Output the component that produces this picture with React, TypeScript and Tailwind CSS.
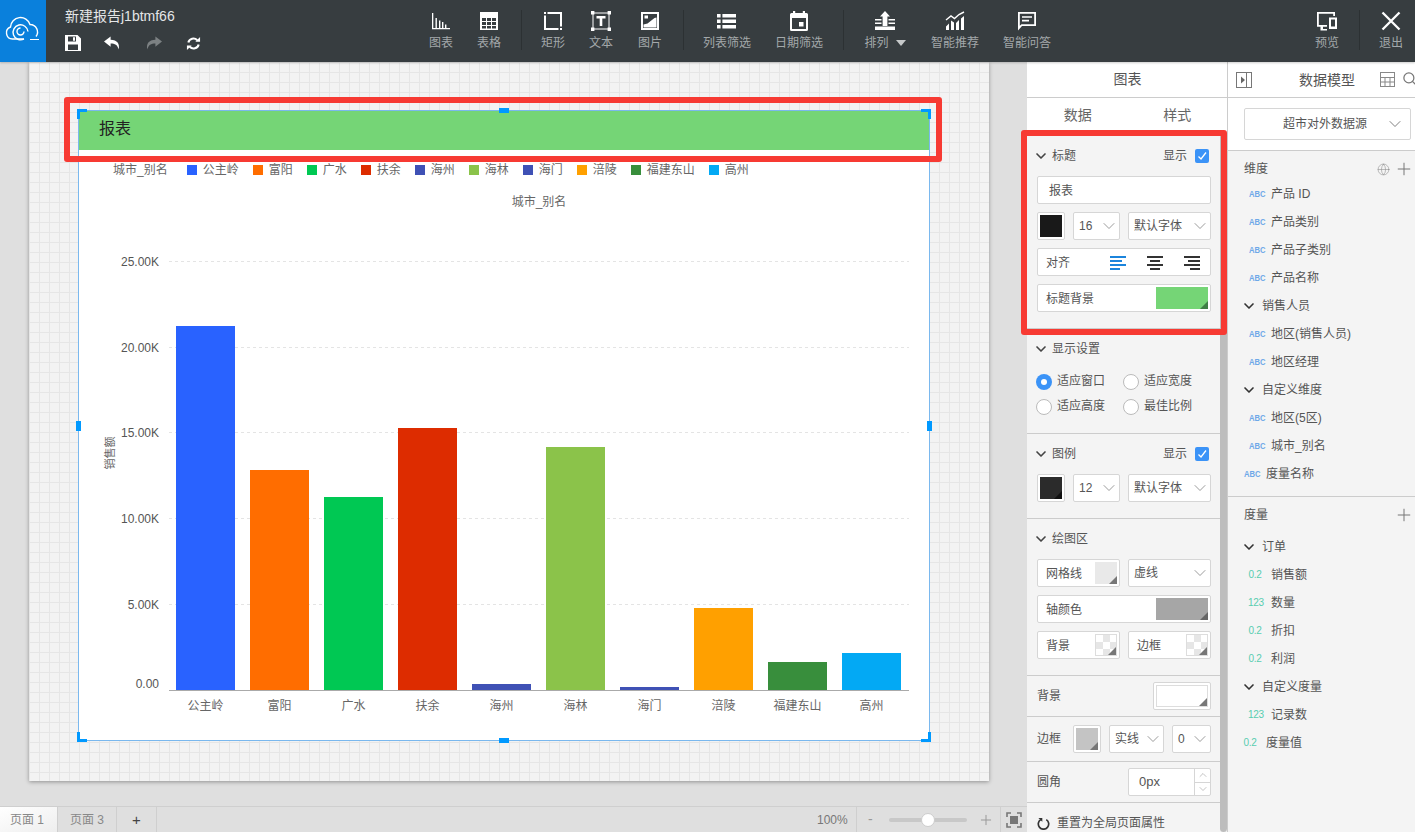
import { ChevronDown, Plus, Search, Globe, ChevronUp } from 'lucide-react';
import { ReactNode } from 'react';

const bars = [
  { name: '公主岭', top: 326, color: '#2962ff' },
  { name: '富阳', top: 470, color: '#ff6d00' },
  { name: '广水', top: 497, color: '#00c853' },
  { name: '扶余', top: 428, color: '#dd2c00' },
  { name: '海州', top: 684, color: '#3f51b5' },
  { name: '海林', top: 447, color: '#8bc34a' },
  { name: '海门', top: 687, color: '#3f51b5' },
  { name: '涪陵', top: 608, color: '#ffa000' },
  { name: '福建东山', top: 662, color: '#388e3c' },
  { name: '高州', top: 653, color: '#03a9f4' },
];

const ticks = [
  { label: '25.00K', y: 261 },
  { label: '20.00K', y: 347 },
  { label: '15.00K', y: 432 },
  { label: '10.00K', y: 518 },
  { label: '5.00K', y: 604 },
];

const field = 'border border-[#d6d6d6] rounded-[2px] bg-white flex items-center text-xs text-[#555]';

const ToolItem = ({ icon, label, w = 'w-[48px]' }: { icon: ReactNode; label: ReactNode; w?: string }) => (
  <div className={`${w} flex flex-col items-center pt-[11px] text-xs text-[#a3a8aa]`}>
    <div className="h-[20px] w-[20px] text-white">{icon}</div>
    <div className="mt-[4px] leading-[16px] whitespace-nowrap">{label}</div>
  </div>
);

const Sep = () => <div className="w-px h-[40px] mt-[10px] mx-[7.5px] bg-[#2c3133]" />;

const icons = {
  chart: (
    <svg viewBox="0 0 20 20" fill="currentColor"><path d="M1 2h1.300v15H19v1.300H1z" /><path d="M4.500 7h1.400v10H4.500zM8 9.500h1.400V17H8zM11 11h1.400v6H11zM14 13.500h1.400V17H14z" /></svg>
  ),
  table: (
    <svg viewBox="0 0 20 20"><rect x="1" y="1" width="18" height="18" fill="currentColor" /><path d="M3 7h4v3H3zM8 7h4v3H8zM13 7h4v3h-4zM3 11h4v3H3zM8 11h4v3H8zM13 11h4v3h-4zM3 15h4v2.500H3zM8 15h4v2.500H8zM13 15h4v2.500h-4z" fill="#373d40" /></svg>
  ),
  rect: (
    <svg viewBox="0 0 20 20" fill="currentColor"><path d="M1 1h2v2H1zM4.500 1H19v2H4.500zM17 3h2v12.500h-2zM17 17h2v2h-2zM1 17h14.500v2H1zM1 4.500h2V17H1z" /></svg>
  ),
  text: (
    <svg viewBox="0 0 20 20" fill="currentColor"><path d="M2 2h16v16H2z" fill="none" stroke="currentColor" strokeWidth="1" /><path d="M0 0h3.400v3.400H0zM16.600 0H20v3.400h-3.400zM0 16.600h3.400V20H0zM16.600 16.600H20V20h-3.400z" /><path d="M5.500 5h9v2.400h-3.200V15H8.700V7.400H5.500z" /></svg>
  ),
  image: (
    <svg viewBox="0 0 20 20" fill="currentColor"><path fillRule="evenodd" d="M1 1h18v18H1zM3 3v14h14V3z" /><path d="M3.500 16.500v-3l4-1 7-5.500 2-.5v10z" /><rect x="4.500" y="4.500" width="3.500" height="3" /></svg>
  ),
  list: (
    <svg viewBox="0 0 20 20" fill="currentColor"><path d="M0 3h3.600v3.400H0zM5.400 3H19v3.400H5.400zM0 8.500h3.600v3.400H0zM5.400 8.500H19v3.400H5.400zM0 14h3.600v3.400H0zM5.400 14H19v3.400H5.400z" /></svg>
  ),
  calendar: (
    <svg viewBox="0 0 20 20" fill="currentColor"><path fillRule="evenodd" d="M4 0h2.200v2h7.600V0H16v2h1.500A1.500 1.500 0 0119 3.500v15a1.500 1.500 0 01-1.500 1.500h-15A1.500 1.500 0 011 18.500v-15A1.500 1.500 0 012.500 2H4zM3 7v11h14V7z" /><rect x="10" y="11" width="4.500" height="4.500" /></svg>
  ),
  arrange: (
    <svg viewBox="0 0 20 20" fill="currentColor"><path d="M10 0l5 5.500H12.400V15H7.600V5.500H5z" /><path d="M0 8h6.500v1.500H0zM13.500 8H20v1.500h-6.500zM0 11.500h6.500V13H0zM13.500 11.500H20V13h-6.500zM0 15.500h20V19H0z" /></svg>
  ),
  recommend: (
    <svg viewBox="0 0 20 20" fill="currentColor"><path d="M1 9l5-4 3.500 2.500L14 3.500l5-2.500" fill="none" stroke="currentColor" strokeWidth="1.400" /><path d="M1 19v-3.500l3-3V19zM6 19V9.500l3 2V19zM11 19v-7l3-3v10zM16 19V7.500l3-2.500v14z" /></svg>
  ),
  answer: (
    <svg viewBox="0 0 20 20" fill="currentColor"><path fillRule="evenodd" d="M1 1h18v14H5l-4 4.500zM2.800 2.800v12l1.700-1.600h12.700V2.800z" /><path d="M5 5.200h10v1.600H5zM5 8.800h7v1.600H5z" /></svg>
  ),
  preview: (
    <svg viewBox="0 0 20 20" fill="currentColor"><path fillRule="evenodd" d="M0 1h18v4h-1.800V2.800H1.800V14H10v1.800H6V18h4v1.500H3.500V15.800H0z" /><path fillRule="evenodd" d="M12 6.500h8V18h-8zM14 8.500v7h4v-7z" /></svg>
  ),
  close: (
    <svg viewBox="0 0 20 20" fill="none" stroke="currentColor" strokeWidth="2.300"><path d="M1.500 1.500l17 17M18.500 1.500l-17 17" /></svg>
  ),
};

const Corner = ({ className }: { className: string }) => (
  <div className={`absolute w-[10px] h-[10px] border-[#0099ff] ${className}`} />
);

const Swatch = ({ className, tri = 'border-b-[#777]' }: { className: string; tri?: string }) => (
  <div className={`relative ${className}`}>
    <div className={`absolute right-0 bottom-0 w-0 h-0 border-l-[8px] border-l-transparent border-b-[8px] ${tri}`} />
  </div>
);

const Check = () => (
  <div className="w-[14px] h-[14px] rounded-[2px] bg-[#3b93f7] flex items-center justify-center">
    <svg viewBox="0 0 14 14" className="w-[14px] h-[14px]" fill="none" stroke="#fff" strokeWidth="1.300"><path d="M3.500 7.500l2.500 2.500 5-6.500" /></svg>
  </div>
);

const SectionHead = ({ title, show }: { title: string; show?: boolean }) => (
  <div className="h-[20px] flex items-center text-xs text-[#555]">
    <ChevronDown size={16} strokeWidth={2.500} className="ml-[-4px] text-[#444]" />
    <span className="ml-[3px]">{title}</span>
    {show && (
      <div className="ml-auto flex items-center gap-[8px] mr-[2px]">
        <span>显示</span>
        <Check />
      </div>
    )}
  </div>
);

const Select = ({ label, className }: { label: string; className: string }) => (
  <div className={`${field} ${className} h-[28px] pl-[5px] justify-between`}>
    <span>{label}</span>
    <ChevronDown size={20} strokeWidth={1} className="text-[#888]" />
  </div>
);

const Radio = ({ label, on }: { label: string; on?: boolean }) => (
  <div className="flex items-center text-xs text-[#555] h-[25px]">
    {on ? (
      <div className="w-[16px] h-[16px] rounded-full bg-[#3b93f7] flex items-center justify-center">
        <div className="w-[6px] h-[6px] rounded-full bg-white" />
      </div>
    ) : (
      <div className="w-[16px] h-[16px] rounded-full border border-[#bbb] bg-white" />
    )}
    <span className="ml-[5px] relative top-[-1px]">{label}</span>
  </div>
);

const Align = ({ right, center, color }: { right?: boolean; center?: boolean; color: string }) => (
  <svg viewBox="0 0 16 14" className="w-[16px] h-[14px]" fill={color}>
    <rect x="0" y="0" width="16" height="2" />
    <rect x={right ? 4 : center ? 3 : 0} y="4" width={center ? 10 : 12} height="2" />
    <rect x="0" y="8" width="16" height="2" />
    <rect x={right ? 6 : center ? 3 : 0} y="12" width="10" height="2" />
  </svg>
);

const Tag = ({ kind }: { kind: string }) => (
  <span
    className={`inline-block w-[14px] text-center leading-none whitespace-nowrap ${
      kind === 'ABC' ? 'text-[9px] font-bold text-[#6ea8e8] scale-x-85' : 'text-[10px] text-[#58cdb0] tracking-[-0.3px]'
    }`}
  >
    {kind}
  </span>
);

const Leaf = ({ kind, name, flush }: { kind: string; name: string; flush?: boolean }) => (
  <div className={`h-[28px] flex items-center text-xs text-[#555] ${flush ? 'pl-[15px]' : 'pl-[20px]'}`}>
    <Tag kind={kind} />
    <span className="ml-[9px]">{name}</span>
  </div>
);

const Group = ({ name }: { name: string }) => (
  <div className="h-[28px] flex items-center text-xs text-[#555] pl-[17px]">
    <ChevronDown size={16} strokeWidth={2.500} className="text-[#333] ml-[-4px]" />
    <span className="ml-[5px]">{name}</span>
  </div>
);

export default function App() {
  return (
    <div className="relative w-[1415px] h-[832px] overflow-hidden bg-[#dfdfdf] font-['Liberation_Sans','Noto_Sans_CJK_SC',sans-serif]">
      {/* Top bar */}
      <header className="h-[62px] flex bg-[#373d40] shadow-[0_1px_2px_rgba(0,0,0,0.2)] relative z-10">
        <div className="w-[46px] bg-[#0a80dc]">
          <svg viewBox="0 0 46 62" className="w-[46px] h-[62px]" fill="none" stroke="#fff" strokeWidth="1.400">
            <path d="M24 39H12.500A6.200 6.200 0 0 1 10.500 27A10 10 0 0 1 30 24.500A7.500 7.500 0 0 1 36 36.500" />
            <path d="M24 39A7.500 7.500 0 1 1 28 31.500" />
            <path d="M24 31.500A3.500 3.500 0 1 1 20.500 28" />
            <path d="M30 39.500H39" strokeWidth="1" />
          </svg>
        </div>
        <div className="w-[371px] pl-[19px] pt-[8px]">
          <div className="text-[14px] leading-[17px] text-[#e4e6e7]">新建报告j1btmf66</div>
          <div className="flex items-center gap-[24px] mt-[10px] text-white">
            <svg viewBox="0 0 16 16" className="w-[16px] h-[16px] mr-[-1px]" fill="currentColor"><path fillRule="evenodd" d="M0 0h12.500L16 3.500V16H0zM3 1.500v5h8v-5zM8 2.200h2v3.500H8zM3 9.500V15h10V9.500z" /></svg>
            <svg viewBox="0 0 18 16" className="w-[17px] h-[16px]" fill="currentColor"><path d="M7 1L0 6.500 7 12V8.500c4.500 0 7.500 1.500 8.500 6.500C17 9 14 4.500 7 4.500z" /></svg>
            <svg viewBox="0 0 18 16" className="w-[17px] h-[16px]" fill="#7c8183"><path d="M11 1l7 5.500L11 12V8.500C6.500 8.500 3.500 10 2.500 15 1 9 4 4.500 11 4.500z" /></svg>
            <svg viewBox="0 0 16 16" className="w-[15px] h-[15px]" fill="none" stroke="currentColor" strokeWidth="2.200"><path d="M2.500 7a5.500 5.500 0 019.500-2.500M13.500 9A5.500 5.500 0 014 11.500" /><path d="M15 1v5h-5zM1 15v-5h5z" fill="currentColor" stroke="none" /></svg>
          </div>
        </div>
        <div className="flex">
          <ToolItem icon={icons.chart} label="图表" />
          <ToolItem icon={icons.table} label="表格" />
          <Sep />
          <ToolItem icon={icons.rect} label="矩形" />
          <ToolItem icon={icons.text} label="文本" />
          <ToolItem icon={icons.image} label="图片" w="w-[50px]" />
          <Sep />
          <ToolItem icon={icons.list} label="列表筛选" w="w-[72px]" />
          <ToolItem icon={icons.calendar} label="日期筛选" w="w-[72px]" />
          <Sep />
          <ToolItem
            w="w-[68px]"
            icon={icons.arrange}
            label={
              <span className="flex items-center gap-[7px]">
                排列
                <span className="w-0 h-0 border-x-[5px] border-x-transparent border-t-[6px] border-t-[#c6c9ca]" />
              </span>
            }
          />
          <ToolItem icon={icons.recommend} label="智能推荐" w="w-[72px]" />
          <ToolItem icon={icons.answer} label="智能问答" w="w-[72px]" />
        </div>
        <div className="ml-auto flex">
          <ToolItem icon={icons.preview} label="预览" />
          <Sep />
          <ToolItem icon={icons.close} label="退出" />
        </div>
      </header>

      <div className="flex h-[770px]">
        {/* Canvas */}
        <main className="w-[1027px] flex flex-col">
          <div className="flex-1 pl-[29px]">
            <div className="w-[960px] h-[719px] pt-[48px] pl-[49px] bg-[#f3f3f3] bg-[linear-gradient(#e6e6e6_1px,transparent_1px),linear-gradient(90deg,#e6e6e6_1px,transparent_1px)] bg-[size:10px_10px] shadow-[0_1px_4px_rgba(0,0,0,0.35)]">
              <div className="relative w-[852px] h-[631px] bg-white border border-[#7ab8ee]">
                <div className="h-[39px] bg-[#75d576] flex items-center pl-[20px] pb-[3px] text-[16px] text-[#222]">报表</div>
                <div className="mt-[10px] h-[20px] flex items-center pl-[34px] text-xs text-[#666]">
                  <span className="mr-[5px]">城市_别名</span>
                  {bars.map((b) => (
                    <div key={b.name} className="flex items-center ml-[14px]">
                      <span className="w-[10px] h-[10px] mr-[6px]" style={{ backgroundColor: b.color }} />
                      {b.name}
                    </div>
                  ))}
                </div>
                <svg viewBox="79 180 850 560" className="w-[850px] h-[560px] block">
                  <text x="539" y="206" textAnchor="middle" fontSize="12" fill="#666">城市_别名</text>
                  <text transform="translate(113.500 453) rotate(-90)" textAnchor="middle" fontSize="11" fill="#666">销售额</text>
                  {ticks.map((t) => (
                    <g key={t.label}>
                      <line x1="169" x2="909" y1={t.y + 0.5} y2={t.y + 0.5} stroke="#e4e4e4" strokeDasharray="3 3" />
                      <text x="159" y={t.y + 4.5} textAnchor="end" fontSize="12" fill="#555">{t.label}</text>
                    </g>
                  ))}
                  <text x="159" y="688" textAnchor="end" fontSize="12" fill="#555">0.00</text>
                  {bars.map((b, i) => (
                    <g key={b.name}>
                      <rect x={176 + i * 74} y={b.top} width="59" height={690 - b.top} fill={b.color} />
                      <text x={205.5 + i * 74} y="710" textAnchor="middle" fontSize="12" fill="#666">{b.name}</text>
                    </g>
                  ))}
                  <line x1="169" x2="909" y1="690.5" y2="690.5" stroke="#aaa" />
                </svg>

                {/* Selection handles */}
                <Corner className="left-[-2px] top-[-2px] border-l-[3px] border-t-[3px]" />
                <Corner className="right-[-2px] top-[-2px] border-r-[3px] border-t-[3px]" />
                <Corner className="left-[-2px] bottom-[-2px] border-l-[3px] border-b-[3px]" />
                <Corner className="right-[-2px] bottom-[-2px] border-r-[3px] border-b-[3px]" />
                <div className="absolute left-[420px] top-[-3px] w-[10px] h-[5px] bg-[#0099ff]" />
                <div className="absolute left-[420px] bottom-[-3px] w-[10px] h-[5px] bg-[#0099ff]" />
                <div className="absolute left-[-3px] top-[310px] w-[5px] h-[10px] bg-[#0099ff]" />
                <div className="absolute right-[-3px] top-[310px] w-[5px] h-[10px] bg-[#0099ff]" />
              </div>
            </div>
          </div>
          {/* Page tabs and zoom */}
          <div className="h-[26px] flex items-stretch border-t border-[#cfcfcf] text-xs text-[#888]">
            <div className="w-[57px] pl-[10px] bg-gradient-to-br from-white to-[#eeeeee] flex items-center">页面 1</div>
            <div className="w-[60px] border-x border-[#cfcfcf] flex items-center justify-center">页面 3</div>
            <div className="w-[40px] border-r border-[#cfcfcf] flex items-center justify-center text-[15px] text-[#444]">+</div>
            <div className="ml-auto w-[39px] flex items-center text-[#777]">100%</div>
            <div className="w-[144px] border-l border-[#cfcfcf] flex items-center text-[#999]">
              <span className="ml-[11px] w-[6px] text-[14px]">-</span>
              <div className="relative ml-[15px] w-[78px] h-[4px] rounded-full bg-[#c8c8c8]">
                <div className="absolute left-[32px] top-[-5px] w-[14px] h-[14px] rounded-full bg-white border border-[#ccc]" />
              </div>
              <Plus size={16} strokeWidth={1.500} className="ml-[11px]" />
            </div>
            <div className="w-[27px] border-l border-[#cfcfcf] flex items-center justify-center">
              <svg viewBox="0 0 16 16" className="w-[16px] h-[16px]" fill="none" stroke="#777" strokeWidth="1.600"><path d="M1 5V1h4M11 1h4v4M15 11v4h-4M5 15H1v-4" /><rect x="4" y="4" width="8" height="8" fill="#777" stroke="none" /></svg>
            </div>
          </div>
        </main>

        {/* Style panel */}
        <aside className="w-[200px] flex flex-col bg-[#f4f4f4] overflow-hidden">
          <div className="h-[36px] shrink-0 bg-white border-b border-[#ccc] flex items-center justify-center pl-[1px] pb-[1px] text-sm text-[#555]">图表</div>
          <div className="h-[36px] shrink-0 bg-white flex items-center text-sm text-[#666] pl-[1px] pb-[2px]">
            <div className="w-[100px] text-center">数据</div>
            <div className="w-[100px] text-center">样式</div>
          </div>
          <div className="flex flex-1 min-h-0">
            <div className="w-[193px] shrink-0">
              <section className="h-[195px] border-b border-[#ccc] pl-[10px] pr-[9px] pt-[12px]">
                <SectionHead title="标题" show />
                <div className={`${field} w-[174px] mt-[10px] h-[28px] pl-[11px] pt-[1px]`}>报表</div>
                <div className="flex mt-[8px]">
                  <div className="w-[28px] h-[28px] p-[2px] border border-[#d6d6d6] bg-white rounded-[2px]"><div className="w-full h-full bg-[#191919]" /></div>
                  <Select label="16" className="w-[47px] ml-[8px]" />
                  <Select label="默认字体" className="w-[83px] ml-[8px]" />
                </div>
                <div className={`${field} w-[174px] mt-[8px] h-[28px] pl-[8px] pt-[1px]`}>
                  <span>对齐</span>
                  <div className="ml-auto flex gap-[21px] mr-[10px]">
                    <Align color="#1b84dc" />
                    <Align center color="#333" />
                    <Align right color="#333" />
                  </div>
                </div>
                <div className={`${field} w-[174px] mt-[8px] h-[28px] pl-[8px] justify-between pr-[2px]`}>
                  <span className="pt-[1px]">标题背景</span>
                  <Swatch className="w-[52px] h-[22px] bg-[#75d576]" tri="border-b-[#3f7f45]" />
                </div>
              </section>
              <section className="h-[105px] border-b border-[#ccc] pl-[10px] pr-[9px] pt-[10px]">
                <SectionHead title="显示设置" />
                <div className="grid grid-cols-[87px_1fr] mt-[10px] ml-[-1px]">
                  <Radio label="适应窗口" on />
                  <Radio label="适应宽度" />
                  <Radio label="适应高度" />
                  <Radio label="最佳比例" />
                </div>
              </section>
              <section className="h-[85px] border-b border-[#ccc] pl-[10px] pr-[9px] pt-[10px]">
                <SectionHead title="图例" show />
                <div className="flex mt-[10px]">
                  <div className="w-[28px] h-[28px] p-[2px] border border-[#d6d6d6] bg-white rounded-[2px]">
                    <Swatch className="w-full h-full bg-[#2b2b2b]" tri="border-b-[#111]" />
                  </div>
                  <Select label="12" className="w-[47px] ml-[8px]" />
                  <Select label="默认字体" className="w-[83px] ml-[8px]" />
                </div>
              </section>
              <section className="h-[157px] border-b border-[#ccc] pl-[10px] pr-[9px] pt-[10px]">
                <SectionHead title="绘图区" />
                <div className="flex mt-[10px]">
                  <div className={`${field} w-[83px] h-[28px] pl-[8px] pr-[2px] justify-between`}>
                    <span className="pt-[1px]">网格线</span>
                    <Swatch className="w-[22px] h-[22px] bg-[#e9e9e9]" />
                  </div>
                  <Select label="虚线" className="w-[83px] ml-[8px]" />
                </div>
                <div className={`${field} w-[174px] h-[28px] mt-[8px] pl-[8px] pr-[2px] justify-between`}>
                  <span className="pt-[1px]">轴颜色</span>
                  <Swatch className="w-[52px] h-[22px] bg-[#a6a6a6]" tri="border-b-[#666]" />
                </div>
                <div className="flex mt-[8px]">
                  <div className={`${field} w-[83px] h-[28px] pl-[8px] pr-[2px] justify-between`}>
                    <span className="pt-[1px]">背景</span>
                    <Swatch className="w-[22px] h-[22px] border border-[#ddd] bg-[repeating-conic-gradient(#e6e6e6_0_25%,#fff_0_50%)] bg-[size:14px_14px]" />
                  </div>
                  <div className={`${field} w-[83px] h-[28px] ml-[8px] pl-[8px] pr-[2px] justify-between`}>
                    <span className="pt-[1px]">边框</span>
                    <Swatch className="w-[22px] h-[22px] border border-[#ddd] bg-[repeating-conic-gradient(#e6e6e6_0_25%,#fff_0_50%)] bg-[size:14px_14px]" />
                  </div>
                </div>
              </section>
              <section className="h-[41px] border-b border-[#ccc] pl-[10px] flex items-center text-xs text-[#555]">
                <span>背景</span>
                <div className="ml-auto mr-[9px] w-[58px] h-[28px] p-[2px] border border-[#d6d6d6] bg-white rounded-[2px]">
                  <Swatch className="w-full h-full border border-[#ddd] bg-white" />
                </div>
              </section>
              <section className="h-[45px] border-b border-[#ccc] pl-[10px] flex items-center text-xs text-[#555]">
                <span className="w-[36px]">边框</span>
                <div className="w-[28px] h-[28px] p-[2px] border border-[#d6d6d6] bg-white rounded-[2px]">
                  <Swatch className="w-full h-full bg-[#c4c4c4]" />
                </div>
                <Select label="实线" className="w-[55px] ml-[8px]" />
                <Select label="0" className="w-[39px] ml-[8px]" />
              </section>
              <section className="h-[41px] border-b border-[#ccc] pl-[10px] flex items-center text-xs text-[#555]">
                <span>圆角</span>
                <div className={`${field} ml-auto mr-[9px] w-[83px] h-[28px] pl-[10px] justify-between`}>
                  <span className="text-[13px]">0px</span>
                  <div className="w-[16px] h-full border-l border-[#d6d6d6] flex flex-col text-[#888]">
                    <div className="flex-1 border-b border-[#d6d6d6] flex items-center justify-center"><ChevronUp size={12} strokeWidth={1} /></div>
                    <div className="flex-1 flex items-center justify-center"><ChevronDown size={12} strokeWidth={1} /></div>
                  </div>
                </div>
              </section>
              <div className="h-[40px] pl-[10px] flex items-center text-xs text-[#555]">
                <svg viewBox="0 0 14 14" className="w-[13px] h-[13px]" fill="none" stroke="#333" strokeWidth="1.800"><path d="M4 2.800a5.600 5.600 0 106 0" /><path d="M1.500 1h4.200v4.200z" fill="#333" stroke="none" /></svg>
                <span className="ml-[7px]">重置为全局页面属性</span>
              </div>
            </div>
            <div className="w-[7px] bg-[#bdbdbd] rounded-b-[4px]" />
          </div>
        </aside>

        {/* Data model panel */}
        <aside className="w-[188px] border-l border-[#ccc] bg-[#f4f4f4] overflow-hidden">
          <div className="h-[36px] bg-white border-b border-[#ccc] flex items-center relative text-sm text-[#555]">
            <svg viewBox="0 0 16 16" className="absolute left-[8px] top-[10px] w-[16px] h-[16px]" fill="none" stroke="#777"><rect x="0.500" y="0.500" width="15" height="15" /><path d="M10.500 1v14" /><path d="M5 4.500l4 3.500-4 3.500z" fill="#666" stroke="none" /></svg>
            <span className="ml-[71px]">数据模型</span>
            <svg viewBox="0 0 15 15" className="absolute left-[152px] top-[10px] w-[15px] h-[15px]" fill="none" stroke="#888"><rect x="0.500" y="0.500" width="14" height="14" /><path d="M0 5.500h15M0 10h15M5 5v10M10 5v10" /></svg>
            <Search size={15} strokeWidth={2} className="absolute left-[174px] top-[9px] text-[#777]" />
          </div>
          <div className="h-[53px] bg-white border-b border-[#ccc] pl-[16px] pt-[10px]">
            <div className="w-[167px] h-[32px] border border-[#d6d6d6] rounded-[2px] flex items-center text-xs text-[#555] pl-[38px]">
              超市对外数据源
              <ChevronDown size={20} strokeWidth={1} className="ml-auto mr-[5px] text-[#666]" />
            </div>
          </div>
          <div className="h-[346px] border-b border-[#ccc]">
            <div className="h-[36px] pl-[16px] flex items-center text-xs text-[#555]">
              维度
              <Globe size={13} strokeWidth={1} className="ml-auto text-[#888]" />
              <Plus size={20} strokeWidth={1.200} className="ml-[4px] mr-[1px] text-[#777]" />
            </div>
            <div className="mt-[-7px]">
              <Leaf kind="ABC" name="产品 ID" />
              <Leaf kind="ABC" name="产品类别" />
              <Leaf kind="ABC" name="产品子类别" />
              <Leaf kind="ABC" name="产品名称" />
              <Group name="销售人员" />
              <Leaf kind="ABC" name="地区(销售人员)" />
              <Leaf kind="ABC" name="地区经理" />
              <Group name="自定义维度" />
              <Leaf kind="ABC" name="地区(5区)" />
              <Leaf kind="ABC" name="城市_别名" />
              <Leaf kind="ABC" name="度量名称" flush />
            </div>
          </div>
          <div className="h-[36px] pl-[16px] flex items-center text-xs text-[#555]">
            度量
            <Plus size={20} strokeWidth={1.200} className="ml-auto mr-[1px] text-[#777]" />
          </div>
          <Group name="订单" />
          <Leaf kind="0.2" name="销售额" />
          <Leaf kind="123" name="数量" />
          <Leaf kind="0.2" name="折扣" />
          <Leaf kind="0.2" name="利润" />
          <Group name="自定义度量" />
          <Leaf kind="123" name="记录数" />
          <Leaf kind="0.2" name="度量值" flush />
        </aside>
      </div>

      {/* Red annotation frames */}
      <div className="absolute left-[64px] top-[97px] w-[878px] h-[65px] border-[6px] border-[#f73a33] rounded-[3px] z-20" />
      <div className="absolute left-[1021px] top-[130px] w-[206px] h-[205px] border-[6px] border-[#f73a33] rounded-[3px] z-20" />
    </div>
  );
}
